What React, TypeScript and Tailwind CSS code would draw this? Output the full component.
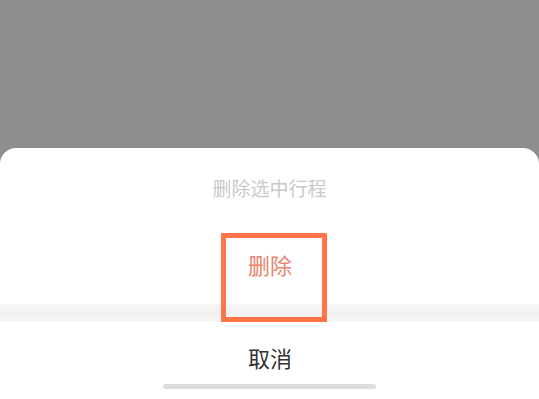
export default function App() {
  return (
    <div
      className="flex h-[399px] w-full flex-col overflow-hidden bg-[#8e8e8e]"
      style={{ fontFamily: '"Noto Sans CJK SC", "Noto Sans", sans-serif' }}
    >
      <div className="h-[148px] shrink-0" />
      <div className="relative flex flex-1 flex-col rounded-t-[16px] bg-white">
        <div className="flex h-[78px] items-center justify-center pt-[2px] text-[19px] text-[#c9c9c9]">
          删除选中行程
        </div>
        <div className="flex h-[78px] items-center justify-center pb-[2px] pl-[1px] text-[22px] text-[#e9846e]">
          删除
        </div>
        <div className="h-[18px] bg-gradient-to-b from-[#f7f7f7] via-[#f0f0f0] to-[#f7f7f7]" />
        <div className="flex flex-1 flex-col items-center">
          <div className="mt-[23px] pl-[1px] text-[22px] leading-[24px] text-[#333333]">取消</div>
          <div className="mt-[15px] h-[5px] w-[213px] rounded-full bg-[#dedede]" />
        </div>
        <div className="absolute left-[221px] top-[85px] h-[89px] w-[106px] border-[5px] border-[#ff7448]" />
      </div>
    </div>
  );
}
